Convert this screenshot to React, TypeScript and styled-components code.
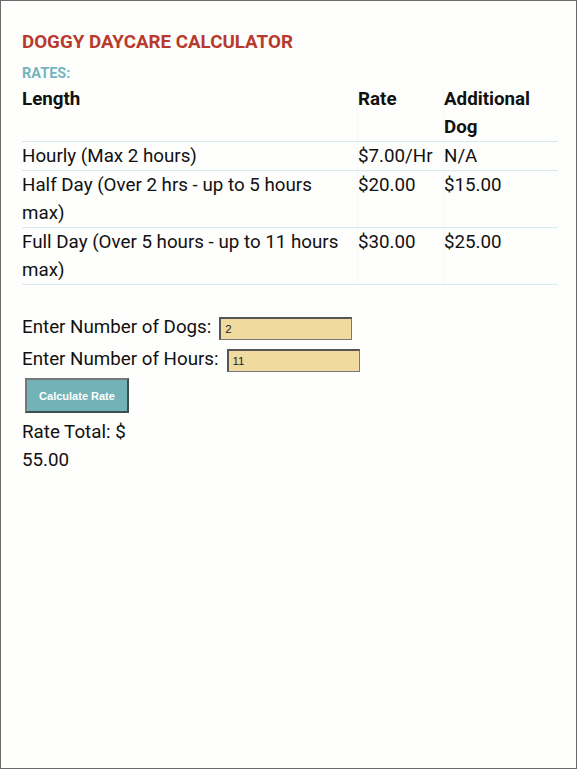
import React from "react";
import styled, { createGlobalStyle } from "styled-components";

const Global = createGlobalStyle`
  html, body { margin: 0; padding: 0; background: #ffffff; }
  body { font-family: Roboto, "Liberation Sans", Arial, sans-serif; }
`;

const Frame = styled.div`
  box-sizing: border-box;
  width: 577px;
  height: 769px;
  border: 1px solid #6a6a6a;
  background: #fefefc;
  padding: 30px 19px 0 21px;
  color: #111;
`;

const Title = styled.h1`
  margin: 0;
  font-size: 18.75px;
  line-height: 22px;
  font-weight: 700;
  color: #b83a2d;
`;

const SubTitle = styled.h2`
  margin: 12px 0 0;
  font-size: 14.5px;
  line-height: 17px;
  font-weight: 700;
  color: #74b5bf;
`;

const Table = styled.table`
  margin-top: 3px;
  width: 536px;
  border-collapse: collapse;
  table-layout: fixed;
  font-size: 18.75px;
  line-height: 28px;
`;

const Cell = styled.td<{ $width?: number }>`
  padding: 0;
  vertical-align: top;
  border-bottom: 1px solid #d8eaef;
  ${(p) => (p.$width ? `width: ${p.$width}px;` : "")}
  & + & { border-left: 1px solid #f4f9fa; }
`;

const HeadCell = styled(Cell).attrs({ as: "th" })`
  text-align: left;
  font-weight: 700;
`;

const Form = styled.div`
  margin-top: 26px;
  display: flex;
  flex-direction: column;
  align-items: flex-start;
`;

const FieldRow = styled.label`
  display: flex;
  align-items: baseline;
  gap: 8px;
  font-size: 18.75px;
  line-height: 32px;
`;

const Input = styled.input`
  box-sizing: border-box;
  width: 133px;
  height: 23px;
  padding: 0 4px;
  font-family: "Liberation Sans", Arial, sans-serif;
  font-size: 11.5px;
  color: #222;
  background: #f1da9d;
  border-style: solid;
  border-width: 2px 1px 1px 2px;
  border-color: #555 #777 #777 #555;
  outline: none;
`;

const Button = styled.button`
  margin: 3px 0 5px 3px;
  box-sizing: border-box;
  width: 104px;
  height: 35px;
  background: #72b3b8;
  color: #ffffff;
  font-family: "Liberation Sans", Arial, sans-serif;
  font-weight: 700;
  font-size: 11px;
  border-style: solid;
  border-width: 2px;
  border-color: #777 #3f4f50 #3f4f50 #777;
  padding: 0;
  cursor: pointer;
`;

const Result = styled.div`
  font-size: 18.75px;
  line-height: 28px;
`;

const rows = [
  ["Hourly (Max 2 hours)", "$7.00/Hr", "N/A"],
  ["Half Day (Over 2 hrs - up to 5 hours max)", "$20.00", "$15.00"],
  ["Full Day (Over 5 hours - up to 11 hours max)", "$30.00", "$25.00"],
];

export default function App() {
  return (
    <>
      <Global />
      <Frame>
        <Title>DOGGY DAYCARE CALCULATOR</Title>
        <SubTitle>RATES:</SubTitle>
        <Table>
          <thead>
            <tr>
              <HeadCell $width={335}>Length</HeadCell>
              <HeadCell $width={85}>Rate</HeadCell>
              <HeadCell>Additional Dog</HeadCell>
            </tr>
          </thead>
          <tbody>
            {rows.map((r) => (
              <tr key={r[0]}>
                <Cell>{r[0]}</Cell>
                <Cell>{r[1]}</Cell>
                <Cell>{r[2]}</Cell>
              </tr>
            ))}
          </tbody>
        </Table>
        <Form>
          <FieldRow>
            Enter Number of Dogs:
            <Input defaultValue="2" />
          </FieldRow>
          <FieldRow>
            Enter Number of Hours:
            <Input defaultValue="11" />
          </FieldRow>
          <Button type="button">Calculate Rate</Button>
          <Result>
            <div>Rate Total: $</div>
            <div>55.00</div>
          </Result>
        </Form>
      </Frame>
    </>
  );
}
